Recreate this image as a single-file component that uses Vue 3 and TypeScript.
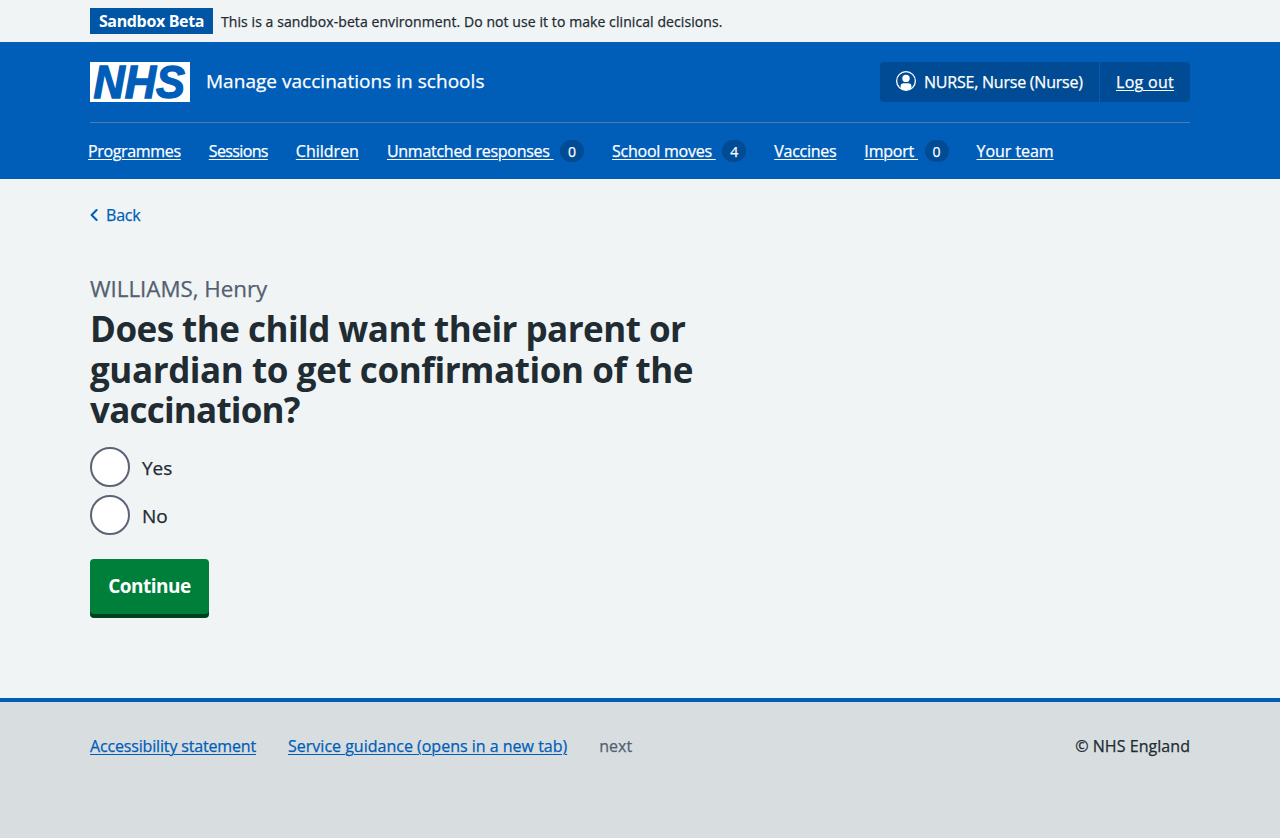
<script setup lang="ts">
import { ref } from 'vue'

interface NavItem {
  key: string
  label: string
  count?: number
}

const navItems: NavItem[] = [
  { key: 'programmes', label: 'Programmes' },
  { key: 'sessions', label: 'Sessions' },
  { key: 'children', label: 'Children' },
  { key: 'unmatched', label: 'Unmatched responses ', count: 0 },
  { key: 'moves', label: 'School moves ', count: 4 },
  { key: 'vaccines', label: 'Vaccines' },
  { key: 'import', label: 'Import ', count: 0 },
  { key: 'team', label: 'Your team' },
]

const headingLines = [
  'Does the child want their parent or',
  'guardian to get confirmation of the',
  'vaccination?',
]

const options = ['Yes', 'No']
const answer = ref<string | null>(null)
</script>

<template>
  <div class="page">
    <div class="env">
      <div class="container env-row">
        <strong class="env-tag"><span>Sandbox Beta</span></strong>
        <span class="env-text">This is a sandbox-beta environment. Do not use it to make clinical decisions.</span>
      </div>
    </div>

    <header class="header">
      <div class="container">
        <div class="header-top">
          <svg class="logo" viewBox="0 0 100 40" width="100" height="40" role="img" aria-label="NHS">
            <rect width="100" height="40" fill="#fff" />
            <text x="3.5" y="36" textLength="91.5" lengthAdjust="spacingAndGlyphs">NHS</text>
          </svg>
          <a class="service">Manage vaccinations in schools</a>
          <div class="account">
            <span class="account-user">
              <svg width="20" height="20" viewBox="0 0 20 20" aria-hidden="true">
                <circle cx="10" cy="10" r="9.35" fill="none" stroke="#fff" stroke-width="1.3" />
                <circle cx="10" cy="7.4" r="3.7" fill="#fff" />
                <path d="M4.6 17.3V15c0-1.6 1.3-2.7 3-2.7h4.8c1.7 0 3 1.1 3 2.7v2.3A9.3 9.3 0 0 1 10 19.2a9.3 9.3 0 0 1-5.4-1.9Z" fill="#fff" />
              </svg>
              <span class="account-name">NURSE, Nurse (Nurse)</span>
            </span>
            <span class="account-out"><a>Log out</a></span>
          </div>
        </div>
        <nav class="nav">
          <a v-for="item in navItems" :key="item.key" class="nav-link">
            <span class="nav-text" :class="item.key">{{ item.label }}</span>
            <span v-if="item.count !== undefined" class="badge">{{ item.count }}</span>
          </a>
        </nav>
      </div>
    </header>

    <main class="container main">
      <a class="back">
        <svg width="8" height="14" viewBox="0 0 8 14" aria-hidden="true">
          <path d="M6.6 2 1.6 7l5 5" fill="none" stroke="#005eb8" stroke-width="2.1" stroke-linecap="round" stroke-linejoin="round" />
        </svg>
        <span>Back</span>
      </a>
      <span class="caption">WILLIAMS, Henry</span>
      <h1 class="heading">
        <span v-for="(line, i) in headingLines" :key="line" :class="'line-' + i">{{ line }}</span>
      </h1>
      <div class="radios">
        <label v-for="option in options" :key="option" class="radio">
          <input v-model="answer" type="radio" name="confirm" :value="option" />
          <span>{{ option }}</span>
        </label>
      </div>
      <button type="button" class="button">Continue</button>
    </main>

    <footer class="footer">
      <div class="container footer-row">
        <a class="f-access">Accessibility statement</a>
        <a class="f-guide">Service guidance (opens in a new tab)</a>
        <span class="f-next">next</span>
        <span class="f-copy">© NHS England</span>
      </div>
    </footer>
  </div>
</template>

<style>
body {
  background: #d8dde0;
}
</style>

<style scoped>
.page {
  min-height: 838px;
  display: flex;
  flex-direction: column;
  background: #f0f4f5;
  color: #212b32;
  font-family: "Open Sans", "Noto Sans", sans-serif;
  font-size: 16px;
  line-height: 24px;
  white-space: nowrap;
  -webkit-text-stroke-width: 0.25px;
}
.container {
  width: 1100px;
  margin: 0 auto;
}
.env-row {
  height: 42px;
  display: flex;
  align-items: center;
  gap: 8px;
}
.env-tag {
  width: 123px;
  height: 26px;
  line-height: 26px;
  background: #0055a5;
  color: #fff;
  font-weight: 700;
  letter-spacing: -0.35px;
  text-align: center;
  -webkit-text-stroke-width: 0;
}
.env-text {
  padding-top: 1px;
  font-size: 14px;
  letter-spacing: 0.08px;
}
.header {
  height: 137px;
  background: #005eb8;
  color: #fff;
}
.header-top {
  height: 80px;
  display: flex;
  align-items: center;
  border-bottom: 1px solid #4c7ead;
}
.logo {
  display: block;
  overflow: visible;
}
.logo text {
  font-family: "Liberation Sans", Arial, sans-serif;
  font-size: 45.5px;
  font-weight: 700;
  font-style: italic;
  fill: #005eb8;
  stroke: #005eb8;
  stroke-width: 1.4px;
}
.service {
  margin: -2px 0 0 16px;
  font-size: 19px;
  letter-spacing: 0.03px;
}
.account {
  margin-left: auto;
  width: 310px;
  height: 40px;
  display: flex;
  background: #004b93;
  border-radius: 4px;
}
.account-user {
  width: 220px;
  box-sizing: border-box;
  padding-left: 16px;
  display: flex;
  align-items: center;
  gap: 8px;
  border-right: 1px solid #005eb8;
}
.account-user svg {
  margin-top: -2px;
}
.account-name {
  letter-spacing: -0.22px;
}
.account-out {
  flex: 1;
  padding-left: 16px;
  line-height: 40px;
  letter-spacing: 0.3px;
}
.account-out a,
.nav-text,
.f-access,
.f-guide {
  text-decoration: underline;
  text-decoration-thickness: 1px;
  text-underline-offset: 2px;
}
.nav {
  height: 56px;
  margin-left: -2px;
  display: flex;
  align-items: center;
  gap: 28px;
}
.nav-link {
  display: flex;
  align-items: center;
}
.nav-text {
  white-space: pre;
}
.badge {
  margin-left: 6.5px;
  width: 24px;
  height: 22px;
  border-radius: 12px;
  background: #004b93;
  font-size: 14px;
  line-height: 23px;
  text-align: center;
}
.programmes { letter-spacing: -0.34px; }
.sessions { letter-spacing: -0.63px; }
.unmatched { letter-spacing: -0.27px; }
.moves { letter-spacing: -0.25px; }
.vaccines { letter-spacing: -0.26px; }
.import { letter-spacing: -0.2px; }
.team { letter-spacing: -0.05px; }
.main {
  flex: 1;
  display: flex;
  flex-direction: column;
  align-items: flex-start;
}
.back {
  margin-top: 24px;
  display: flex;
  align-items: center;
  gap: 8px;
  color: #005eb8;
}
.back span {
  letter-spacing: -0.2px;
}
.caption {
  margin-top: 46px;
  font-size: 22.4px;
  line-height: 32px;
  letter-spacing: -0.05px;
  color: #545f70;
}
.heading {
  margin: 4px 0 16px;
  font-size: 35px;
  line-height: 40.5px;
  font-weight: 700;
  -webkit-text-stroke-width: 0;
}
.heading span {
  display: block;
}
.line-0 { letter-spacing: -0.53px; }
.line-1 { letter-spacing: -0.42px; }
.line-2 { letter-spacing: -0.78px; }
.radios {
  display: flex;
  flex-direction: column;
  gap: 8px;
}
.radio {
  height: 40px;
  display: flex;
  align-items: center;
  gap: 12px;
  font-size: 19px;
}
.radio span {
  padding-top: 2px;
}
.radio input {
  appearance: none;
  box-sizing: border-box;
  width: 40px;
  height: 40px;
  margin: 0;
  border: 2px solid #5f6273;
  border-radius: 50%;
  background: #fff;
}
.radio input:checked {
  box-shadow: inset 0 0 0 8px #fff;
  background: #212b32;
}
.button {
  margin-top: 24px;
  width: 119px;
  height: 55px;
  padding: 0;
  border: 0;
  border-radius: 4px;
  background: #007f3b;
  box-shadow: 0 4px 0 #00401e;
  color: #fff;
  font-family: inherit;
  font-size: 19px;
  font-weight: 700;
  letter-spacing: -0.5px;
  -webkit-text-stroke-width: 0;
}
.footer {
  height: 136px;
  border-top: 4px solid #005eb8;
  background: #d8dde0;
}
.footer-row {
  padding-top: 32px;
  display: flex;
}
.f-access,
.f-guide {
  color: #005eb8;
  margin-right: 32px;
}
.f-access {
  letter-spacing: -0.16px;
}
.f-next {
  color: #545f70;
}
.f-copy {
  margin-left: auto;
  letter-spacing: 0.05px;
}
</style>
